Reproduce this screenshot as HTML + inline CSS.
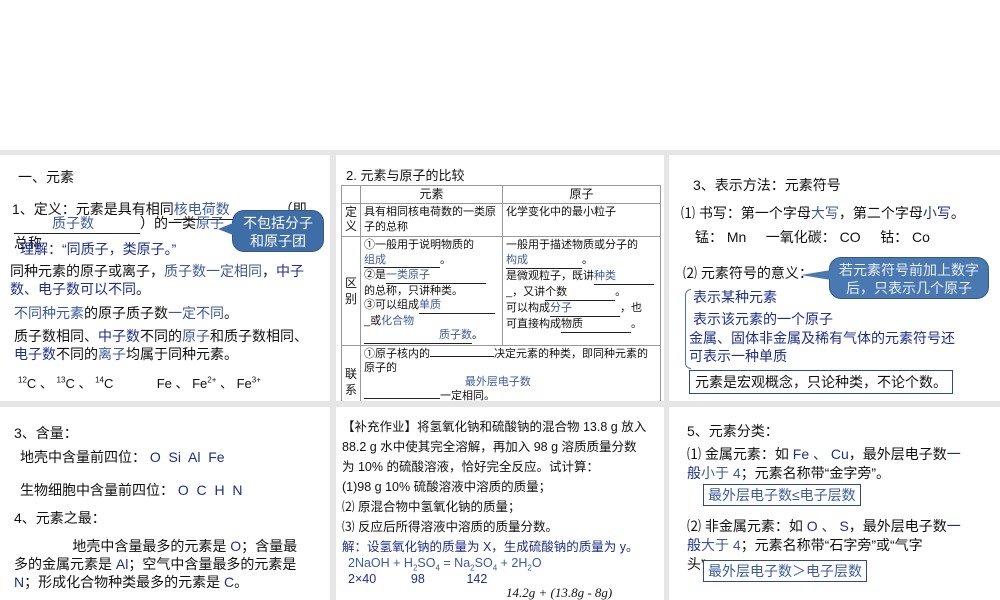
<!DOCTYPE html>
<html><head><meta charset="utf-8"><style>
*{margin:0;padding:0;box-sizing:border-box}
body{width:1000px;height:600px;background:#fff;position:relative;overflow:hidden;font-family:"Liberation Sans","Noto Sans CJK SC",sans-serif;color:#111;font-size:14px}
.gray{position:absolute;left:0;top:150px;width:1000px;height:450px;background:#e6e6e6}
.p{position:absolute;background:#fff;overflow:hidden}
.a{position:absolute;white-space:nowrap}
.b{color:#1c2f8a}.l{color:#3d5b9a}
.u{display:inline-block;border-bottom:1px solid #222}
.bub{position:absolute;background:#4a78b0;border:1px solid #2f5a8a;border-radius:12px;color:#fff;text-align:center;font-size:14px;line-height:18px}
table{border-collapse:collapse;font-size:11px}
td{border:1px solid #999;vertical-align:top;padding:1px 3px;line-height:15px}
sup{font-size:8px}sub{font-size:8px}
</style></head><body>
<div class="gray"></div>

<div class="p" style="left:0;top:155px;width:330px;height:246px">
<div class="a" style="left:18px;top:12px;font-size:14px">一、元素</div>
<div class="a" style="left:12px;top:44px">1、定义：元素是具有相同<span class="u l" style="width:105px">核电荷数</span>（即</div>
<div class="a" style="left:14px;top:58px"><span class="u l" style="width:126px;padding-left:38px">质子数</span>）的一类<span class="l">原子</span>_____</div>
<div class="a" style="left:14px;top:78px">总称</div>
<div class="a b" style="left:20px;top:84px">理解：“同质子，类原子。”</div>
<div class="a" style="left:10px;top:107px;line-height:18px">同种元素的原子或离子，<span class="l">质子数一定相同</span>，<span class="b">中子</span><br><span class="b">数、电子数可以不同</span>。</div>
<div class="a" style="left:14px;top:148px"><span class="l">不同种元素</span>的原子质子数<span class="l">一定不同</span>。</div>
<div class="a" style="left:14px;top:172px;line-height:18px">质子数相同、<span class="b">中子数</span>不同的<span class="l">原子</span>和质子数相同、<br><span class="b">电子数</span>不同的<span class="l">离子</span>均属于同种元素。</div>
<div class="a" style="left:18px;top:218px;font-size:13px"><sup>12</sup>C 、 <sup>13</sup>C 、 <sup>14</sup>C&nbsp;&nbsp;&nbsp;&nbsp;&nbsp;&nbsp;&nbsp;&nbsp;&nbsp;&nbsp;&nbsp; Fe 、 Fe<sup>2+</sup> 、 Fe<sup>3+</sup></div>
<div class="bub" style="left:232px;top:55px;width:92px;height:42px;padding-top:3px;background:#3f6da6">不包括分子<br>和原子团</div>
<div style="position:absolute;left:218px;top:68px;width:0;height:0;border-top:6px solid transparent;border-bottom:6px solid transparent;border-right:15px solid #3f6da6"></div>
</div>

<div class="p" style="left:336px;top:155px;width:328px;height:246px">
<div class="a" style="left:10px;top:10px;font-size:13px">2. 元素与原子的比较</div>
<table style="position:absolute;left:5px;top:30px;width:320px">
<tr><td style="width:18px"></td><td style="width:142px;text-align:center;font-size:12px">元素</td><td style="text-align:center;font-size:12px">原子</td></tr>
<tr style="height:33px"><td style="font-size:12px;line-height:14px">定<br>义</td><td>具有相同核电荷数的一类原子的总称</td><td>化学变化中的最小粒子</td></tr>
<tr style="height:106px"><td style="vertical-align:middle;font-size:12px;line-height:16px">区<br>别</td><td style="line-height:14.5px">①一般用于说明物质的<br><span class="u l" style="width:76px">组成</span>。<br>②是<span class="u l" style="width:100px">一类原子</span><br>的总称，只讲种类。<br>③可以组成<span class="u l" style="width:76px">单质</span><br>_或<span class="l">化合物</span><br><span class="u l" style="width:108px;text-align:right">质子数</span>。</td><td>一般用于描述物质或分子的<br><span class="u l" style="width:76px">构成</span>。<br>是微观粒子，既讲<span class="u l" style="width:60px">种类</span><br>_，又讲<span class="u" style="width:70px">个数</span>。<br>可以构成<span class="u l" style="width:70px">分子</span>，也<br>可直接构成<span class="u" style="width:70px">物质</span>。</td></tr>
<tr><td style="vertical-align:middle;font-size:12px;line-height:16px">联<br>系</td><td colspan="2" style="line-height:14px">①原子核内的<span class="u" style="width:64px"></span>决定元素的种类，即同种元素的原子的<br>&nbsp;&nbsp;&nbsp;&nbsp;&nbsp;&nbsp;&nbsp;&nbsp;&nbsp;&nbsp;&nbsp;&nbsp;&nbsp;&nbsp;&nbsp;&nbsp;&nbsp;&nbsp;&nbsp;&nbsp;&nbsp;&nbsp;&nbsp;&nbsp;&nbsp;&nbsp;&nbsp;&nbsp;&nbsp;&nbsp;&nbsp;&nbsp;&nbsp;<span class="l">最外层电子数</span><br><span class="u" style="width:76px"></span>一定相同。<br>②元素的性质与原子&nbsp;&nbsp;&nbsp;&nbsp;&nbsp;&nbsp;&nbsp;&nbsp;&nbsp;&nbsp;&nbsp;&nbsp;&nbsp;&nbsp;&nbsp;&nbsp;&nbsp;&nbsp;&nbsp;&nbsp;&nbsp;&nbsp;&nbsp;&nbsp;&nbsp;&nbsp;&nbsp;&nbsp;&nbsp;&nbsp;&nbsp;&nbsp;&nbsp;&nbsp;&nbsp;&nbsp;关系</td></tr>
</table>
</div>

<div class="p" style="left:669px;top:155px;width:331px;height:246px">
<div class="a" style="left:24px;top:20px">3、表示方法：元素符号</div>
<div class="a" style="left:12px;top:48px">⑴ 书写：第一个字母<span class="l">大写</span>，第二个字母<span class="b">小写</span>。</div>
<div class="a" style="left:26px;top:72px">锰： Mn&nbsp;&nbsp;&nbsp;&nbsp; 一氧化碳： CO&nbsp;&nbsp;&nbsp;&nbsp; 钴： Co</div>
<div class="a" style="left:14px;top:108px">⑵ 元素符号的意义：</div>
<div class="a b" style="left:24px;top:132px">表示某种元素</div>
<div class="a b" style="left:24px;top:154px">表示该元素的一个原子</div>
<div class="a b" style="left:20px;top:174px;line-height:18px">金属、固体非金属及稀有气体的元素符号还<br>可表示一种单质</div>
<div style="position:absolute;left:16px;top:134px;width:6px;height:80px;border:1px solid #4a78b0;border-right:none;border-radius:6px 0 0 6px"></div>
<div class="a" style="left:20px;top:215px;border:1px solid #2f4a8a;padding:1px 5px">元素是宏观概念，只论种类，不论个数。</div>
<div class="bub" style="left:160px;top:102px;width:160px;height:42px;padding-top:3px;color:#e8eef8">若元素符号前加上数字<br>后，只表示几个原子</div>
<div style="position:absolute;left:132px;top:115px;width:0;height:0;border-top:5px solid transparent;border-bottom:5px solid transparent;border-right:30px solid #4a78b0"></div>
</div>

<div class="p" style="left:0;top:407px;width:330px;height:193px">
<div class="a" style="left:14px;top:16px">3、含量：</div>
<div class="a" style="left:20px;top:40px">地壳中含量前四位： <span class="b">O&nbsp; Si&nbsp; Al&nbsp; Fe</span></div>
<div class="a" style="left:20px;top:73px">生物细胞中含量前四位： <span class="b">O&nbsp; C&nbsp; H&nbsp; N</span></div>
<div class="a" style="left:14px;top:101px">4、元素之最：</div>
<div class="a" style="left:14px;top:130px;line-height:18px">&nbsp;&nbsp;&nbsp;&nbsp;&nbsp;&nbsp;&nbsp;&nbsp;&nbsp;&nbsp;&nbsp;&nbsp;&nbsp;&nbsp; 地壳中含量最多的元素是 <span class="b">O</span>；含量最<br>多的金属元素是 <span class="b">Al</span>；空气中含量最多的元素是<br><span class="b">N</span>；形成化合物种类最多的元素是 <span class="b">C</span>。</div>
</div>

<div class="p" style="left:336px;top:407px;width:328px;height:193px;font-size:12.5px">
<div class="a" style="left:6px;top:10px;line-height:20px">【补充作业】将氢氧化钠和硫酸钠的混合物 13.8 g 放入<br>88.2 g 水中使其完全溶解，再加入 98 g 溶质质量分数<br>为 10% 的硫酸溶液，恰好完全反应。试计算：<br>(1)98 g 10% 硫酸溶液中溶质的质量；<br>⑵ 原混合物中氢氧化钠的质量；<br>⑶ 反应后所得溶液中溶质的质量分数。</div>
<div class="a b" style="left:6px;top:129px">解：设氢氧化钠的质量为 X，生成硫酸钠的质量为 y。</div>
<div class="a l" style="left:12px;top:149px">2NaOH + H<sub>2</sub>SO<sub>4</sub> = Na<sub>2</sub>SO<sub>4</sub> + 2H<sub>2</sub>O</div>
<div class="a b" style="left:12px;top:165px">2×40&nbsp;&nbsp;&nbsp;&nbsp;&nbsp;&nbsp;&nbsp;&nbsp;&nbsp; 98&nbsp;&nbsp;&nbsp;&nbsp;&nbsp;&nbsp;&nbsp;&nbsp;&nbsp;&nbsp;&nbsp; 142</div>
<div class="a" style="left:170px;top:178px;font-family:'Liberation Serif',serif;font-style:italic;font-size:13px">14.2g + (13.8g - 8g)</div>
</div>

<div class="p" style="left:669px;top:407px;width:331px;height:193px">
<div class="a" style="left:18px;top:14px">5、元素分类：</div>
<div class="a" style="left:18px;top:38px;line-height:19px">⑴ 金属元素：如 <span class="b">Fe 、 Cu</span>，最外层电子数<span class="b">一</span><br><span class="b">般</span><span class="l">小于 4</span>；元素名称带“金字旁”。</div>
<div class="a l" style="left:34px;top:77px;border:1px solid #2f4a8a;padding:0 4px">最外层电子数≤电子层数</div>
<div class="a" style="left:18px;top:110px;line-height:19px">⑵ 非金属元素：如 <span class="b">O 、 S</span>，最外层电子数<span class="b">一</span><br><span class="b">般</span><span class="l">大于 4</span>；元素名称带“石字旁”或“气字<br>头”</div>
<div class="a l" style="left:34px;top:153px;border:1px solid #2f4a8a;padding:0 4px;background:#fff">最外层电子数＞电子层数</div>
</div>
</body></html>
